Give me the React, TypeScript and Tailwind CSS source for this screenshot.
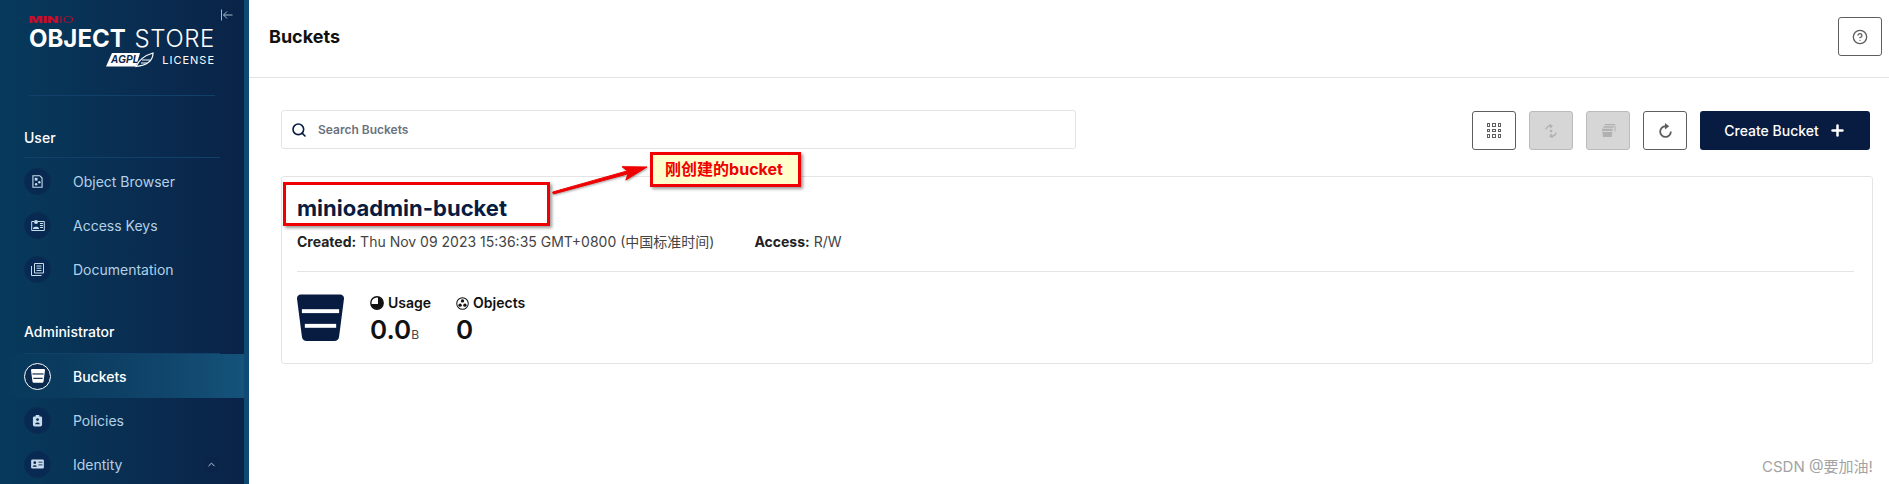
import React from 'react';
import { ChevronUp, CircleHelp, Plus, Search } from 'lucide-react';

const sans = "font-['Inter','Noto_Sans_CJK_SC',sans-serif]";

const BucketGlyph = ({ className, stripe = '#fff' }: { className?: string; stripe?: string }) => (
  <svg viewBox="0 0 48 48" className={className}>
    <path d="M4 0h40a4 4 0 0 1 4 4.400L43 43a5 5 0 0 1-5 4.500H10A5 5 0 0 1 5 43L0 4.400A4 4 0 0 1 4 0Z" fill="currentColor" />
    <rect x="5" y="15" width="38" height="4" fill={stripe} />
    <rect x="8" y="30" width="32" height="4" fill={stripe} />
  </svg>
);

const ObjectBrowserIcon = () => (
  <svg viewBox="0 0 12 14" className="h-[13px] w-[11px]" fill="none">
    <path d="M1 .700h7.500L11 3.200v10H1Z" stroke="#c8dcec" strokeWidth="1.200" />
    <rect x="3" y="3" width="3" height="3" fill="#c8dcec" />
    <circle cx="8" cy="7.800" r="1.300" fill="#c8dcec" />
    <circle cx="4.500" cy="10" r="1.300" fill="#c8dcec" />
  </svg>
);

const AccessKeysIcon = () => (
  <svg viewBox="0 0 14 12" className="h-[12px] w-[14px]" fill="none">
    <path d="M3 2.500H.700v9h12.600v-9H7" stroke="#c8dcec" />
    <circle cx="5" cy="3" r="2" fill="#c8dcec" />
    <path d="M2 9.500c0-2.500 6-2.500 6 0v.500H2Z" fill="#c8dcec" />
    <path d="M9 4.500h3M9 6.500h3M9 8.500h3" stroke="#c8dcec" />
  </svg>
);

const DocumentationIcon = () => (
  <svg viewBox="0 0 13 13" className="h-[13px] w-[13px]" fill="none" stroke="#c8dcec">
    <path d="M3.500 10V.500h9V10Z" />
    <path d="M.500 3v9.500h10" />
    <path d="M5.500 3h5M5.500 5.200h5M5.500 7.500h5" />
  </svg>
);

const PoliciesIcon = () => (
  <svg viewBox="0 0 12 14" className="h-[13px] w-[11px]">
    <path d="M4 2.500V1h4v1.500h1.500A1.500 1.500 0 0 1 11 4v7.500A2 2 0 0 1 9 13.500H3a2 2 0 0 1-2-2V4a1.500 1.500 0 0 1 1.500-1.500Z" fill="#c8dcec" />
    <circle cx="6" cy="6" r="1.500" fill="#0a2a4f" />
    <path d="M3.500 11c0-2.500 5-2.500 5 0Z" fill="#0a2a4f" />
  </svg>
);

const IdentityIcon = () => (
  <svg viewBox="0 0 14 11" className="h-[10px] w-[13px]">
    <rect x="0" y="0.500" width="14" height="10" rx="1.500" fill="#c8dcec" />
    <circle cx="4" cy="4" r="1.500" fill="#0a2a4f" />
    <path d="M1.800 8.500c0-2 4.400-2 4.400 0Z" fill="#0a2a4f" />
    <path d="M8 3.500h4.500M8 6.500h4.500" stroke="#0a2a4f" />
  </svg>
);

const NavItem = ({ icon, label, active, right }: { icon: React.ReactNode; label: string; active?: boolean; right?: React.ReactNode }) => (
  <div className={`flex h-[44px] shrink-0 items-center pl-6 ${active ? 'bg-gradient-to-r from-transparent to-[#14537a]' : ''}`}>
    <div className={`flex h-[27px] w-[27px] items-center justify-center rounded-full ${active ? 'border border-white bg-[#0a2a4f]' : 'border border-[#0a2d50] bg-[#082a52]'}`}>
      {icon}
    </div>
    <span className={`ml-[22px] text-[14px] ${active ? 'font-medium text-white' : 'text-[#b4d0e6]'}`}>{label}</span>
    {right}
  </div>
);

const SectionLabel = ({ children, className }: { children: React.ReactNode; className?: string }) => (
  <div className={`mx-6 flex h-[42px] shrink-0 items-center border-b border-[#11406a] text-[14px] font-medium text-white ${className ?? ''}`}>
    {children}
  </div>
);

const Logo = () => (
  <div className="relative mx-[29px] h-[96px] shrink-0 border-b border-[#11406a] pt-[15px]">
    <div className="flex h-[9px] origin-left scale-x-[1.65] items-center text-[9px] leading-none">
      <span className="font-black text-[#c8102e]">MIN</span>
      <span className="font-light text-[#c8102e]">IO</span>
    </div>
    <div className="mt-[6px] flex h-[18px] items-center justify-between whitespace-nowrap text-[24px] leading-none text-white">
      <span className="font-bold">OBJECT</span>
      <span className="font-light tracking-[0.6px]">STORE</span>
    </div>
    <div className="mt-[4px] flex h-[16px] items-center justify-end text-white">
      <svg viewBox="0 0 48 16" className="h-[16px] w-[48px]">
        <path d="M6 1h28l-4 13.500H0Z" fill="#fff" />
        <text x="5" y="10.500" fontSize="10" fontStyle="italic" fontWeight="700" fill="#0a2348" fontFamily="Liberation Sans">AGPL</text>
        <path d="M30 14.500C34 6 40 3 47 1c0 6-4 12-17 13.500Z" fill="none" stroke="#fff" strokeWidth="1.200" />
        <path d="M36 8h8M35 11h6" stroke="#fff" />
      </svg>
      <span className="ml-[8px] text-[11px] tracking-[1px]">LICENSE</span>
    </div>
    <svg viewBox="0 0 12 12" className="absolute left-[192px] top-[9px] h-[12px] w-[12px]" fill="none" stroke="#9fb8cc" strokeWidth="1">
      <path d="M.500 .500v11M11.500 6H2.500M6 2.500 2.500 6 6 9.500" />
    </svg>
  </div>
);

const Sidebar = () => (
  <aside className="flex h-full w-[249px] shrink-0 flex-col overflow-hidden border-r-[5px] border-[#0e4a73] bg-gradient-to-r from-[#063a5c] to-[#0a2348]">
    <Logo />
    <div className="mt-[20px]">
      <SectionLabel className="pt-[1px]">User</SectionLabel>
    </div>
    <div className="pt-[1px]">
      <NavItem icon={<ObjectBrowserIcon />} label="Object Browser" />
      <NavItem icon={<AccessKeysIcon />} label="Access Keys" />
      <NavItem icon={<DocumentationIcon />} label="Documentation" />
    </div>
    <div className="mt-[21px]">
      <SectionLabel className="pb-[2px]">Administrator</SectionLabel>
    </div>
    <NavItem
      active
      icon={<BucketGlyph className="h-[14px] w-[14px] text-white" stripe="#0a2a4f" />}
      label="Buckets"
    />
    <NavItem icon={<PoliciesIcon />} label="Policies" />
    <NavItem
      icon={<IdentityIcon />}
      label="Identity"
      right={
        <div className="ml-auto mr-[25px] flex h-[15px] w-[15px] items-center justify-center rounded-[2px] bg-[#0a2348]">
          <ChevronUp className="h-[11px] w-[11px] text-[#c8dcec]" />
        </div>
      }
    />
  </aside>
);

const ToolButton = ({ children, disabled }: { children: React.ReactNode; disabled?: boolean }) => (
  <div className={`flex h-[39px] w-[44px] items-center justify-center rounded-[3px] border ${disabled ? 'border-[#bbbbbb] bg-[#d6d6d6]' : 'border-[#5e5e5e] bg-white'}`}>
    {children}
  </div>
);

const Toolbar = () => (
  <div className="mt-[1px] flex items-center gap-[13px]">
    <ToolButton>
      <div className="grid grid-cols-3 gap-[2px]">
        {Array.from({ length: 9 }).map((_, i) => (
          <div key={i} className="h-[3.500px] w-[3.500px] border border-[#5e5e5e]" />
        ))}
      </div>
    </ToolButton>
    <ToolButton disabled>
      <svg viewBox="0 0 14 16" className="h-[14px] w-[12px]" fill="none" stroke="#b0b0b0" strokeWidth="1.600">
        <path d="M1 6c1-3 3-4 6-4M5 .500 8 2 6.500 4.500M13 10c-1 3-3 4-6 4M9 15.500 6 14l1.500-2.500" />
        <circle cx="7" cy="8" r="1.500" fill="#b0b0b0" stroke="none" />
      </svg>
    </ToolButton>
    <ToolButton disabled>
      <svg viewBox="0 0 16 16" className="h-[15px] w-[15px]" fill="none">
        <path d="M4 1h11v1.500H4ZM2.500 3.500h11V5h-11Z" fill="#b0b0b0" />
        <path d="M15 3v6" stroke="#b0b0b0" />
        <path d="M1 6h11.500l-1.200 9H2.200Z" fill="#b0b0b0" />
        <path d="M1.500 9h10.500" stroke="#d6d6d6" />
      </svg>
    </ToolButton>
    <ToolButton>
      <svg viewBox="0 0 14 14" className="h-[15px] w-[15px]" fill="none">
        <path d="M12 8A5 5 0 1 1 7 3" stroke="#5e5e5e" strokeWidth="1.700" />
        <path d="M6.500 0 10.500 3 6.500 6Z" fill="#5e5e5e" />
      </svg>
    </ToolButton>
    <div className="flex h-[39px] w-[170px] items-center justify-center gap-[10px] rounded-[3px] bg-[#081c42] text-[14px] font-medium text-white">
      Create Bucket
      <Plus className="h-[17px] w-[17px]" strokeWidth={3.500} />
    </div>
  </div>
);

const Stat = ({ icon, label, children }: { icon: React.ReactNode; label: string; children: React.ReactNode }) => (
  <div className="flex flex-col pt-px">
    <div className="flex h-[16px] items-center gap-[4px] text-[14px] font-semibold leading-none text-[#111]">
      {icon}
      {label}
    </div>
    <div className="mt-[5px] flex items-baseline text-[26px] font-semibold leading-[28px] text-[#111]">{children}</div>
  </div>
);

const BucketCard = () => (
  <div className="mt-[26px] h-[188px] rounded-[3px] border border-[#e4e4e4] pl-[15px] pr-[18px]">
    <div className="mt-[16px] h-[30px] text-[22px] font-bold leading-[30px] text-[#081c42]">minioadmin-bucket</div>
    <div className="mt-[9px] flex h-[18px] items-center text-[14px] text-[#444]">
      <span>
        <b className="font-bold text-[#222]">Created:</b> Thu Nov 09 2023 15:36:35 GMT+0800 (中国标准时间)
      </span>
      <span className="ml-[40px]">
        <b className="font-bold text-[#222]">Access:</b> R/W
      </span>
    </div>
    <div className="mt-[21px] h-px bg-[#e4e4e4]" />
    <div className="mt-[22px] flex">
      <BucketGlyph className="h-[48px] w-[47px] text-[#081c42]" />
      <div className="ml-[26px] flex gap-[25px]">
        <Stat
          label="Usage"
          icon={
            <svg viewBox="0 0 14 14" className="h-[14px] w-[14px]" fill="none">
              <circle cx="7" cy="7" r="6.200" stroke="#111" strokeWidth="1.400" />
              <path d="M8 8V1A6.100 6.100 0 1 1 1 8Z" fill="#111" />
            </svg>
          }
        >
          0.0<span className="text-[12px] font-normal text-[#444]">B</span>
        </Stat>
        <Stat
          label="Objects"
          icon={
            <svg viewBox="0 0 14 14" className="h-[13px] w-[13px]" fill="#111">
              <circle cx="7" cy="7" r="6.200" fill="none" stroke="#111" strokeWidth="1.100" />
              <circle cx="7" cy="4.200" r="1.800" />
              <circle cx="4.400" cy="8.800" r="1.800" />
              <circle cx="9.600" cy="8.800" r="1.800" />
            </svg>
          }
        >
          0
        </Stat>
      </div>
    </div>
  </div>
);

// red callout pasted over the screenshot
const Annotation = () => (
  <>
    <div className="absolute left-[283px] top-[182px] h-[44px] w-[267px] border-[3px] border-[#f00000] shadow-[2px_2px_3px_rgba(0,0,0,0.4)]" />
    <svg className="absolute left-[550px] top-[155px] h-[45px] w-[100px] drop-shadow-[1px_1px_1px_rgba(0,0,0,0.35)]" viewBox="0 0 100 45">
      <polygon points="2.700,37 77.300,15.900 72,11.700 97,12 75.800,25.100 78.100,18.800 3.300,39" fill="#f00000" stroke="#f00000" strokeWidth="1" />
    </svg>
    <div className="absolute left-[650px] top-[152px] flex h-[35px] w-[151px] items-center justify-center border-[3px] border-[#f00000] bg-[#ffffcc] pb-[2px] pr-[3px] text-[16px] font-bold text-[#f00000] shadow-[2px_2px_3px_rgba(0,0,0,0.4)]">
      刚创建的bucket
    </div>
  </>
);

export default function App() {
  return (
    <div className={`relative flex h-[484px] w-[1889px] overflow-hidden bg-white ${sans}`}>
      <Sidebar />
      <main className="flex min-w-0 flex-1 flex-col">
        <header className="flex h-[78px] shrink-0 items-center justify-between border-b border-[#e4e4e4] pb-[4px] pl-[20px] pr-[7px]">
          <h1 className="text-[18px] font-bold text-[#111]">Buckets</h1>
          <div className="flex h-[39px] w-[44px] items-center justify-center rounded-[3px] border border-[#5e5e5e]">
            <CircleHelp className="h-[16px] w-[16px] text-[#5e5e5e]" />
          </div>
        </header>
        <div className="pl-[32px] pr-[16px]">
          <div className="mt-[32px] flex items-start justify-between pr-[3px]">
            <div className="flex h-[39px] w-[795px] items-center rounded-[3px] border border-[#e4e4e4] pl-[9px]">
              <Search className="h-[16px] w-[16px] text-[#081c42]" strokeWidth={2.400} />
              <span className="ml-[11px] text-[12px] font-semibold text-[#6b7280]">Search Buckets</span>
            </div>
            <Toolbar />
          </div>
          <BucketCard />
        </div>
      </main>
      <Annotation />
      <div className="absolute left-[1762px] top-[456px] text-[15px] text-[#a3a3a3]">CSDN @要加油!</div>
    </div>
  );
}
